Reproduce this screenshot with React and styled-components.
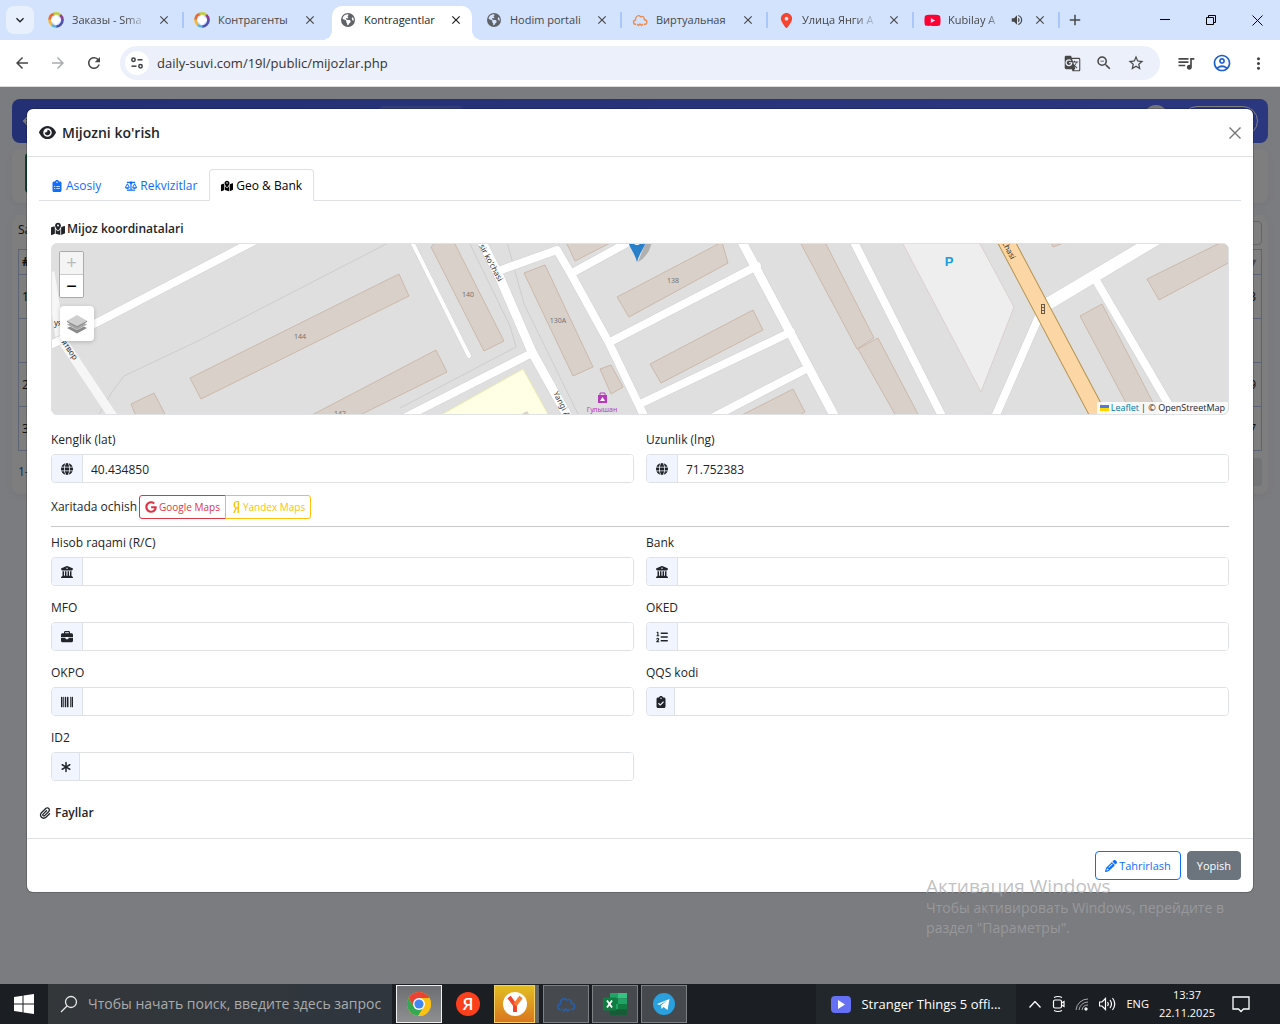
import React from 'react';
import styled, { createGlobalStyle, css } from 'styled-components';
import {
  FaEye, FaClipboardList, FaScaleBalanced, FaMapLocationDot, FaGlobe, FaBuildingColumns,
  FaBriefcase, FaListOl, FaBarcode, FaClipboardCheck, FaAsterisk, FaPaperclip, FaPencil,
  FaGoogle, FaYandex, FaEarthAmericas, FaLocationDot, FaYoutube,
} from 'react-icons/fa6';
import {
  MdArrowBack, MdArrowForward, MdRefresh, MdGTranslate, MdZoomOut, MdStarOutline, MdQueueMusic,
  MdOutlineAccountCircle, MdMoreVert, MdVolumeUp, MdClose, MdAdd, MdKeyboardArrowDown,
} from 'react-icons/md';

const tabs = [
  { title: 'Заказы - Sma', icon: 'ring', line: true, fade: true },
  { title: 'Контрагенты', icon: 'ring' },
  { title: 'Kontragentlar', icon: 'globe', active: true },
  { title: 'Hodim portali', icon: 'globe', line: true },
  { title: 'Виртуальная', icon: 'cloud', line: true },
  { title: 'Улица Янги А', icon: 'pin', line: true, fade: true },
  { title: 'Kubilay A', icon: 'youtube', line: true, sound: true, fade: true },
];

const geoFields = [
  { id: 'lat', label: 'Kenglik (lat)', icon: FaGlobe, value: '40.434850' },
  { id: 'lng', label: 'Uzunlik (lng)', icon: FaGlobe, value: '71.752383' },
];

const bankFields = [
  { id: 'rc', label: 'Hisob raqami (R/C)', icon: FaBuildingColumns },
  { id: 'bank', label: 'Bank', icon: FaBuildingColumns },
  { id: 'mfo', label: 'MFO', icon: FaBriefcase },
  { id: 'oked', label: 'OKED', icon: FaListOl },
  { id: 'okpo', label: 'OKPO', icon: FaBarcode },
  { id: 'qqs', label: 'QQS kodi', icon: FaClipboardCheck, slim: true },
  { id: 'id2', label: 'ID2', icon: FaAsterisk, slim: true },
];

const rows = [
  { no: '1', total: '3' },
  { no: '', total: '' },
  { no: '2', total: '9' },
  { no: '3', total: '7' },
];

const buildings = [
  '190,378 399,274 409,296 201,399',
  '131,404 154,393 166,416 136,416',
  '310,416 436,350 447,372 358,416',
  '431,247 436,242 454,242 504,341 484,351',
  '524,273 545,265 593,367 573,376',
  '600,369 611,365 623,387 611,394',
  '566,242 575,261 612,242',
  '617,297 722,242 728,263 629,317',
  '650,364 753,310 763,330 661,383',
  '740,416 793,389 805,412 798,416',
  '800,242 825,242 874,338 857,349',
  '858,349 878,338 919,416 896,416',
  '1147,279 1222,242 1232,238 1232,261 1159,300',
  '1080,316 1102,304 1160,416 1133,416',
  '1050,240 1053,247 1066,242',
];

const roads = [
  { d: 'M46 347L100 321L256 240', w: 8 },
  { d: 'M408 234L469 356', w: 4 },
  { d: 'M396 422L532 353', w: 8 },
  { d: 'M478 234L500 278L532 352L572 424', w: 9 },
  { d: 'M501 270L557 250L571 274L609 343L648 424', w: 8 },
  { d: 'M572 273L636 238', w: 8 },
  { d: 'M610 342L757 266', w: 8 },
  { d: 'M640 404L791 332', w: 8 },
  { d: 'M702 423L808 368', w: 8 },
  { d: 'M740 238L837 421', w: 9 },
  { d: 'M850 234L946 424', w: 8 },
  { d: 'M992 424L1040 314', w: 8 },
  { d: 'M1046 305L1160 237', w: 12 },
  { d: 'M1097 282L1180 424', w: 8 },
];

const numbers = [
  [300, 339, '144'], [340, 416, '142'], [468, 297, '140'], [558, 323, '130A'], [673, 283, '138'],
];

function MapPicture() {
  return (
    <MapSvg viewBox="52 244 1176 170" preserveAspectRatio="xMidYMid slice" role="img" aria-label="Mijoz koordinatalari">
      <rect x="0" y="200" width="1300" height="260" fill="#dfdfdf" />
      <g fill="none" stroke="#cdcdcd" strokeWidth="1">
        <path d="M98 416L112 392L124 376L200 340L390 242" />
        <path d="M469 242L510 326L516 347L400 408M507 242L524 304L580 418" />
      </g>
      <polygon points="902,242 979,242 1014,307 981,392" fill="#eeeeee" stroke="#dccfcf" />
      <polygon points="523,369 549,416 439,416" fill="#ffffe5" stroke="#ecebb0" />
      <polygon points="522,414 527,411 530,416" fill="#d9d0c9" />
      {buildings.map((points) => (
        <polygon key={points} points={points} fill="#d9d0c9" stroke="#cbb9ab" strokeWidth="1" />
      ))}
      <path d="M50 272L60 337L118 424" fill="none" stroke="#f6f6f6" strokeWidth="9" />
      {roads.map((road) => (
        <path key={road.d} d={road.d} fill="none" stroke="#d2d2d2" strokeWidth={road.w + 1} strokeLinecap="round" strokeLinejoin="round" />
      ))}
      {roads.map((road) => (
        <path key={road.d} d={road.d} fill="none" stroke="#fff" strokeWidth={road.w} strokeLinecap="round" strokeLinejoin="round" />
      ))}
      <path d="M1000 230L1103 424" stroke="#b5924f" strokeWidth="17" />
      <path d="M1000 230L1103 424" stroke="#fcd6a4" strokeWidth="15" />
      <g fontFamily="Noto Sans, sans-serif" fontSize="7" fill="#737373" textAnchor="middle">
        {numbers.map(([x, y, text]) => <text key={text} x={x} y={y}>{text}</text>)}
      </g>
      <g fontFamily="Noto Sans, sans-serif" fontSize="8" fill="#333">
        <text transform="translate(479 246) rotate(62)">sir ko'chasi</text>
        <text transform="translate(553 393) rotate(63)">Yangi A</text>
        <text transform="translate(1002 243) rotate(62)">chasi</text>
        <text transform="translate(61 342) rotate(55)">ятвор</text>
        <text transform="translate(54 326)">уя</text>
      </g>
      <text x="949" y="266" fontFamily="Liberation Sans, sans-serif" fontWeight="700" fontSize="13" fill="#1a9be0" textAnchor="middle">P</text>
      <path d="M598 395h9v8h-9z" fill="#b63ab8" />
      <path d="M600 395v-2h5v2" fill="none" stroke="#b63ab8" />
      <path d="M602.500 397l2.500 4h-5z" fill="#fff" />
      <text x="602" y="412" fontFamily="Noto Sans, sans-serif" fontSize="7" fill="#b63ab8" textAnchor="middle">Гулышан</text>
      <rect x="1041.500" y="304.500" width="3" height="9" fill="none" stroke="#665a48" />
      <path d="M1041 307.500h4M1041 310.500h4" stroke="#665a48" />
      <path d="M638 262L646 242h6q-3 14 -14 20z" fill="#444" opacity="0.3" />
      <path d="M628 242c2 6 7 12 9 20c2 -8 7 -14 9 -20z" fill="#2880ca" />
      <path d="M634 243a3 2 0 0 0 6 0z" fill="#fff" />
    </MapSvg>
  );
}

function Cloud({ color, size = 16 }) {
  return (
    <svg width={size} height={size} viewBox="0 0 16 16" fill="none" stroke={color} strokeWidth="1.3">
      <path d="M4 12.5C1 12.5 .6 8.500 3.500 8C3.300 4 7 2.500 8.500 4.800C11 3.500 12.800 5.500 12.200 7.500C16 8 15.500 12.500 12 12.500" />
      <path d="M5 12l1.500 1.500L8 12l1.500 1.500L11 12" />
    </svg>
  );
}

function Favicon({ kind }) {
  if (kind === 'ring') {
    return (
      <svg width="16" height="16" viewBox="0 0 16 16" fill="none" strokeWidth="2.6">
        <path d="M1.500 8A6.500 6.500 0 0 1 6.500 1.700" stroke="#ea6a2c" />
        <path d="M5.500 2A6.500 6.500 0 0 1 12.500 3.200" stroke="#c2cf45" />
        <path d="M12.200 3A6.500 6.500 0 0 1 14.500 8.500" stroke="#8c3f8f" />
        <path d="M14.500 8A6.500 6.500 0 0 1 8 14.500" stroke="#4f4fb8" />
        <path d="M8.500 14.500A6.500 6.500 0 0 1 3.500 12.600" stroke="#55b4e4" />
        <path d="M4 13A6.500 6.500 0 0 1 1.500 7.500" stroke="#f3b73c" />
        <path d="M8 2.800l5.200 5.200L8 13.200 2.800 8z" fill="#fff" />
      </svg>
    );
  }
  if (kind === 'cloud') return <Cloud color="#ee8a4c" />;
  if (kind === 'pin') return <FaLocationDot size={15} color="#f8432f" />;
  if (kind === 'youtube') return <FaYoutube size={17} color="#f03" />;
  return <FaEarthAmericas size={14} color="#5f6368" />;
}

function Field({ field }) {
  const Icon = field.icon;
  return (
    <FieldBox>
      <FieldLabel htmlFor={field.id}>{field.label}</FieldLabel>
      <InputGroup>
        <InputIcon $slim={field.slim}><Icon /></InputIcon>
        <Input id={field.id} type="text" defaultValue={field.value} />
      </InputGroup>
    </FieldBox>
  );
}

function BrowserBar() {
  return (
    <header>
      <TabStrip>
        <TabSearch aria-label="Search tabs"><MdKeyboardArrowDown size={16} /></TabSearch>
        {tabs.map((tab) => (
          <BrowserTab key={tab.title} $active={tab.active} $line={tab.line}>
            <FaviconBox><Favicon kind={tab.icon} /></FaviconBox>
            <TabTitle $fade={tab.fade}>{tab.title}</TabTitle>
            {tab.sound && <MdVolumeUp size={14} />}
            <TabClose aria-label="Close tab"><MdClose size={14} /></TabClose>
          </BrowserTab>
        ))}
        <NewTab aria-label="New tab"><MdAdd size={18} /></NewTab>
        <WindowButtons>
          <WindowButton aria-label="Minimize">
            <svg width="10" height="10" viewBox="0 0 10 10"><path d="M0 4.500h10" stroke="#000" /></svg>
          </WindowButton>
          <WindowButton aria-label="Restore">
            <svg width="10" height="10" viewBox="0 0 10 10" fill="none" stroke="#000"><path d="M.5 2.500h7v7h-7zM2.500 2.500v-2h7v7h-2" /></svg>
          </WindowButton>
          <WindowButton aria-label="Close">
            <svg width="11" height="11" viewBox="0 0 11 11"><path d="M.5 .5l10 10M10.500 .5l-10 10" stroke="#000" /></svg>
          </WindowButton>
        </WindowButtons>
      </TabStrip>
      <Toolbar>
        <ToolButton aria-label="Back"><MdArrowBack size={18} /></ToolButton>
        <ToolButton aria-label="Forward" $muted><MdArrowForward size={18} /></ToolButton>
        <ToolButton aria-label="Reload"><MdRefresh size={18} /></ToolButton>
        <AddressBar>
          <SiteInfo aria-label="Site information">
            <svg width="14" height="14" viewBox="0 0 14 14" fill="none" stroke="#3c4043" strokeWidth="1.500">
              <circle cx="3.500" cy="3.800" r="1.700" /><path d="M7.500 3.800h5" />
              <circle cx="10.500" cy="10.200" r="1.700" /><path d="M1.500 10.200h5" />
            </svg>
          </SiteInfo>
          <Address aria-label="Address" defaultValue="daily-suvi.com/19l/public/mijozlar.php" />
          <ToolButton aria-label="Translate"><MdGTranslate size={17} /></ToolButton>
          <ToolButton aria-label="Zoom"><MdZoomOut size={18} /></ToolButton>
          <ToolButton aria-label="Bookmark"><MdStarOutline size={18} /></ToolButton>
        </AddressBar>
        <ToolButton aria-label="Media"><MdQueueMusic size={20} /></ToolButton>
        <ToolButton aria-label="Profile" $blue><MdOutlineAccountCircle size={20} /></ToolButton>
        <ToolButton aria-label="Menu"><MdMoreVert size={19} /></ToolButton>
      </Toolbar>
    </header>
  );
}

function ClientsPage() {
  return (
    <PageContent>
      <Navbar>
        <MdArrowBack size={16} />
        <NavPill />
        <NavAvatar />
        <NavButton />
      </Navbar>
      <ActionCard><GreenButton aria-label="Excel" /></ActionCard>
      <TableCard>
        <TableTop><span>Saralash</span><SearchBox aria-label="Qidirish" /></TableTop>
        <DataTable>
          <thead><tr><th>#</th><th>▾</th></tr></thead>
          <tbody>
            {rows.map((row, i) => <tr key={i}><td>{row.no}</td><td>{row.total}</td></tr>)}
          </tbody>
        </DataTable>
        <TableBottom><a href="#list">1-3</a><PageButton aria-label="Keyingi" /></TableBottom>
      </TableCard>
    </PageContent>
  );
}

function ClientModal() {
  return (
    <Modal role="dialog" aria-labelledby="modal-title">
      <ModalHeader>
        <FaEye size={17} />
        <ModalTitle id="modal-title">Mijozni ko'rish</ModalTitle>
        <CloseButton aria-label="Close">
          <svg width="12" height="12" viewBox="0 0 12 12"><path d="M.5 .5l11 11M11.500 .5l-11 11" stroke="#777" strokeWidth="1.400" /></svg>
        </CloseButton>
      </ModalHeader>
      <ModalBody>
        <NavTabs role="tablist">
          <NavTab role="tab"><FaClipboardList />Asosiy</NavTab>
          <NavTab role="tab"><FaScaleBalanced />Rekvizitlar</NavTab>
          <NavTab role="tab" $active><FaMapLocationDot />Geo &amp; Bank</NavTab>
        </NavTabs>
        <TabPane>
          <SectionTitle><FaMapLocationDot size={14} />Mijoz koordinatalari</SectionTitle>
          <MapBox>
            <MapPicture />
            <ZoomControl>
              <ZoomButton disabled>+</ZoomButton>
              <ZoomButton>−</ZoomButton>
            </ZoomControl>
            <LayersButton aria-label="Layers">
              <svg width="22" height="22" viewBox="0 0 22 22">
                <path d="M1 15l10 5.500L21 15l-3-1.500L11 17l-7-3.500z" fill="#8a8a8a" />
                <path d="M1 11.500L11 17l10-5.500-3-1.500-7 3.500L4 10z" fill="#a8a8a8" />
                <path d="M11 2L1 7.700l10 5.300 10-5.300z" fill="#cfcfcf" />
                <path d="M1 7.700L11 13l10-5.300v1.300L11 14.500 1 9z" fill="#8f8f8f" />
              </svg>
            </LayersButton>
            <Attribution>
              <svg width="9" height="6" viewBox="0 0 9 6"><path d="M0 0h9v3H0z" fill="#4c7be1" /><path d="M0 3h9v3H0z" fill="#ffd500" /></svg>
              <a href="#leaflet">Leaflet</a><span>| © OpenStreetMap</span>
            </Attribution>
          </MapBox>
          <FieldGrid>
            {geoFields.map((field) => <Field key={field.id} field={field} />)}
          </FieldGrid>
          <OpenRow>
            <span>Xaritada ochish</span>
            <MapLinks>
              <MapLink href="#google" $color="#dc3545"><FaGoogle />Google Maps</MapLink>
              <MapLink href="#yandex" $color="#ffc107"><YandexIcon />Yandex Maps</MapLink>
            </MapLinks>
          </OpenRow>
          <Divider />
          <FieldGrid>
            {bankFields.map((field) => <Field key={field.id} field={field} />)}
          </FieldGrid>
        </TabPane>
        <FilesTitle><FaPaperclip />Fayllar</FilesTitle>
      </ModalBody>
      <ModalFooter>
        <Button><FaPencil size={12} />Tahrirlash</Button>
        <Button $solid>Yopish</Button>
      </ModalFooter>
    </Modal>
  );
}

function Taskbar() {
  return (
    <Bar>
      <StartButton aria-label="Start">
        <svg width="20" height="20" viewBox="0 0 20 20" fill="#fff"><path d="M0 3l8.500-1.200v7.700H0zM9.500 1.600L20 0v9.500H9.500zM0 10.500h8.500v7.700L0 17zM9.500 10.500H20V20L9.500 18.400z" /></svg>
      </StartButton>
      <SearchLabel>
        <svg width="18" height="18" viewBox="0 0 18 18" fill="none" stroke="#e8e8e8" strokeWidth="1.300"><circle cx="11" cy="7" r="5.500" /><path d="M7 11l-6 6" /></svg>
        <TaskSearch placeholder="Чтобы начать поиск, введите здесь запрос" aria-label="Поиск" />
      </SearchLabel>
      <Apps>
        <AppButton aria-label="Chrome" $state="current">
          <svg width="24" height="24" viewBox="0 0 24 24">
            <circle cx="12" cy="12" r="12" fill="#fbc116" />
            <path d="M1.600 6A12 12 0 0 1 22.400 6H12L7 15z" fill="#ea4335" />
            <path d="M1.600 6A12 12 0 0 0 11 24l6-9H7z" fill="#34a853" />
            <path d="M22.400 6A12 12 0 0 1 11 24l6-9V6z" fill="#fbc116" />
            <circle cx="12" cy="12" r="6" fill="#fff" /><circle cx="12" cy="12" r="4.600" fill="#4285f4" />
          </svg>
        </AppButton>
        <AppButton aria-label="Yandex" $state="plain"><RedDot>Я</RedDot></AppButton>
        <AppButton aria-label="Yandex Browser" $state="orange">
          <svg width="24" height="24" viewBox="0 0 24 24"><circle cx="12" cy="12" r="12" fill="#fff" /><path d="M6 5l6 8v7" fill="none" stroke="#f4452c" strokeWidth="4" /><path d="M18 5l-6 8" stroke="#f77b32" strokeWidth="4" /></svg>
        </AppButton>
        <AppButton aria-label="ATC"><Cloud color="#285fa9" size={20} /></AppButton>
        <AppButton aria-label="Excel">
          <svg width="24" height="22" viewBox="0 0 24 22">
            <path d="M7 0h8v5.500H7zM7 11h8v5.500H7z" fill="#21a366" /><path d="M15 0h9v5.500h-9z" fill="#33c481" />
            <path d="M7 5.500h8V11H7z" fill="#107c41" /><path d="M15 5.500h9V11h-9z" fill="#21a366" /><path d="M15 11h9v5.500h-9z" fill="#107c41" /><path d="M7 16.500h17V22H7z" fill="#185c37" />
            <path d="M0 4.500h13v13H0z" fill="#107c41" /><path d="M4 7.500l5 7M9 7.500l-5 7" stroke="#fff" strokeWidth="1.800" />
          </svg>
        </AppButton>
        <AppButton aria-label="Telegram">
          <svg width="22" height="22" viewBox="0 0 22 22"><circle cx="11" cy="11" r="11" fill="#2aa1de" /><path d="M4 11l12.500-5-2 11-4-3-2 2-.5-3.500 6-5-7.500 4.500z" fill="#fff" /></svg>
        </AppButton>
      </Apps>
      <MediaBox>
        <svg width="20" height="17" viewBox="0 0 20 17"><rect width="20" height="17" rx="4" fill="#6570f4" /><path d="M7 4l7 4.500L7 13z" fill="#fff" /></svg>
        <span>Stranger Things 5 offi...</span>
      </MediaBox>
      <Tray>
        <svg width="12" height="7" viewBox="0 0 12 7" fill="none" stroke="#fff" strokeWidth="1.300"><path d="M.5 6.500l5.500-6 5.500 6" /></svg>
        <svg width="14" height="18" viewBox="0 0 14 18" fill="none" stroke="#fff" strokeWidth="1.200"><rect x="2.500" y="5" width="8" height="8" rx="1.500" /><path d="M10.500 8l2.500-1.500v5l-2.500-1.500M3 2.500Q7 .5 11 2.500M3 15.500Q7 17.500 11 15.500" /></svg>
        <svg width="14" height="14" viewBox="0 0 14 14" fill="none" stroke="#aaa"><path d="M1 13A12 12 0 0 1 13 2M4 13A9 9 0 0 1 13 5M7 13A6 6 0 0 1 13 8" /><circle cx="11" cy="12" r="1.200" fill="#fff" stroke="#fff" /></svg>
        <svg width="17" height="14" viewBox="0 0 17 14" fill="none" stroke="#fff" strokeWidth="1.200"><path d="M.5 5h2.500l3.500-3.500v11L3 9H.5zM8.500 5q1.500 2 0 4M11 3q3 4 0 8M13.500 1q4.500 6 0 12" /></svg>
        <span>ENG</span>
        <Clock><time>13:37</time><span>22.11.2025</span></Clock>
        <svg width="18" height="18" viewBox="0 0 18 18" fill="none" stroke="#fff" strokeWidth="1.300"><path d="M1 2h16v12h-5.500L9 16.500 6.500 14H1z" /></svg>
      </Tray>
    </Bar>
  );
}

export default function App() {
  return (
    <Desktop>
      <GlobalStyle />
      <BrowserBar />
      <Page>
        <ClientsPage />
        <Backdrop />
        <ClientModal />
        <Watermark>
          <h2>Активация Windows</h2>
          <p>Чтобы активировать Windows, перейдите в<br />раздел "Параметры".</p>
        </Watermark>
      </Page>
      <Taskbar />
    </Desktop>
  );
}

const GlobalStyle = createGlobalStyle`
  * {
    box-sizing: border-box;
  }

  body {
    margin: 0;
    font-family: "Open Sans", "Noto Sans", sans-serif;
    font-size: 12px;
    line-height: 18px;
    color: #212529;
  }

  button, input {
    font: inherit;
    color: inherit;
  }

  button {
    padding: 0;
    border: none;
    background: none;
    cursor: pointer;
  }

  svg {
    flex: none;
  }
`;

const Desktop = styled.div`
  min-height: 100vh;
  display: flex;
  flex-direction: column;
`;

const TabStrip = styled.div`
  display: flex;
  align-items: flex-end;
  height: 40px;
  padding-left: 6px;
  background: #d3e3fd;
`;

const TabSearch = styled.button`
  width: 28px;
  height: 28px;
  margin: 0 4px 6px 0;
  display: flex;
  align-items: center;
  justify-content: center;
  border-radius: 8px;
  background: #e9f0fd;
`;

const BrowserTab = styled.div`
  position: relative;
  flex: 0 1 146px;
  min-width: 0;
  height: 34px;
  padding: 0 12px 6px 10px;
  display: flex;
  align-items: center;
  gap: 8px;
  color: #474747;

  ${(p) => p.$line && css`
    &::after {
      content: "";
      position: absolute;
      right: 0;
      top: 6px;
      width: 2px;
      height: 16px;
      background: #a8c7fa;
    }
  `}

  ${(p) => p.$active && css`
    flex-basis: 140px;
    margin: 0 4px 0 2px;
    padding: 0 8px 6px 8px;
    background: #fff;
    color: #1f1f1f;
    border-radius: 10px 10px 0 0;

    &::before, &::after {
      content: "";
      position: absolute;
      bottom: 0;
      width: 10px;
      height: 10px;
    }

    &::before {
      left: -10px;
      background: radial-gradient(circle at 0 0, transparent 10px, #fff 10px);
    }

    &::after {
      right: -10px;
      background: radial-gradient(circle at 100% 0, transparent 10px, #fff 10px);
    }
  `}
`;

const FaviconBox = styled.span`
  flex: none;
  width: 16px;
  display: flex;
  justify-content: center;
`;

const TabTitle = styled.span`
  flex: 1;
  min-width: 0;
  font-size: 11px;
  white-space: nowrap;
  mask-image: ${(p) => (p.$fade ? 'linear-gradient(to right, #000 70%, transparent)' : 'none')};
`;

const TabClose = styled.button`
  flex: none;
  width: 16px;
  height: 16px;
  display: flex;
  align-items: center;
  justify-content: center;
`;

const NewTab = styled.button`
  width: 28px;
  height: 28px;
  margin: 0 0 6px 1px;
  display: flex;
  align-items: center;
  justify-content: center;
  color: #474747;
`;

const WindowButtons = styled.div`
  display: flex;
  margin-left: auto;
  align-self: stretch;
`;

const WindowButton = styled.button`
  width: 46px;
  display: flex;
  align-items: center;
  justify-content: center;
`;

const Toolbar = styled.div`
  display: flex;
  align-items: center;
  gap: 8px;
  height: 47px;
  padding: 0 8px;
  background: #fff;
  border-bottom: 1px solid #dcdcdc;
`;

const ToolButton = styled.button`
  width: 28px;
  height: 28px;
  display: flex;
  align-items: center;
  justify-content: center;
  color: ${(p) => (p.$blue ? '#1b5fd0' : p.$muted ? '#a9acb0' : '#474747')};
`;

const AddressBar = styled.div`
  flex: 1;
  display: flex;
  align-items: center;
  gap: 4px;
  height: 34px;
  margin: 0 4px;
  padding: 0 10px 0 5px;
  border-radius: 17px;
  background: #ecf0fa;
`;

const SiteInfo = styled.button`
  width: 24px;
  height: 24px;
  display: flex;
  align-items: center;
  justify-content: center;
  border-radius: 50%;
  background: #fff;
`;

const Address = styled.input`
  flex: 1;
  min-width: 0;
  padding: 0 4px;
  border: none;
  outline: none;
  background: none;
  font-size: 13px;
  color: #333;
`;

const Page = styled.main`
  position: relative;
  flex: 1;
  padding: 22px 27px 92px;
  background: #f7f8ff;
`;

/* dimmed list page that stays behind the dialog */
const PageContent = styled.div`
  position: absolute;
  inset: 0;
  padding: 12px;
`;

const Backdrop = styled.div`
  position: absolute;
  inset: 0;
  background: rgba(0, 0, 0, 0.5);
`;

const Navbar = styled.div`
  display: flex;
  align-items: center;
  height: 44px;
  padding: 0 10px 0 8px;
  border-radius: 8px;
  color: #fff;
  background: linear-gradient(to right, #4660e8, #566fff);
`;

const NavPill = styled.span`
  width: 86px;
  height: 30px;
  margin-left: 342px;
  border-radius: 6px;
  background: rgba(255, 255, 255, 0.15);
`;

const NavAvatar = styled.span`
  width: 28px;
  height: 32px;
  margin: 0 12px 0 auto;
  border-radius: 50%;
  background: #eee;
`;

const NavButton = styled.span`
  width: 76px;
  height: 30px;
  border: 1px solid #fff;
  border-radius: 15px;
`;

const ActionCard = styled.div`
  height: 54px;
  margin: 6px 0 12px;
  padding: 4px 13px;
  border-radius: 8px;
  background: #fcfcfc;
  box-shadow: 0 2px 8px rgba(0, 0, 0, 0.05);
`;

const GreenButton = styled.button`
  width: 60px;
  height: 40px;
  border-radius: 4px;
  background: #198754;
`;

const TableCard = styled.div`
  padding: 6px 6px 8px;
  border-radius: 8px;
  background: #fcfcfc;
  box-shadow: 0 2px 8px rgba(0, 0, 0, 0.05);
`;

const TableTop = styled.div`
  display: flex;
  justify-content: space-between;
  height: 28px;
`;

const SearchBox = styled.input`
  width: 180px;
  height: 24px;
  border: 1px solid #ccc;
  border-radius: 4px;
  background: none;
`;

const DataTable = styled.table`
  width: 100%;
  border-collapse: collapse;

  th, td {
    height: 44px;
    padding: 0 3px;
    border: 1px solid #b7c7ea;
    text-align: left;
  }

  th {
    height: 25px;
  }

  th:last-child, td:last-child {
    padding-right: 5px;
    text-align: right;
  }

  th:last-child {
    color: #999;
  }
`;

const TableBottom = styled.div`
  display: flex;
  align-items: center;
  justify-content: space-between;
  padding-top: 7px;

  a {
    color: #2456b8;
    text-decoration: none;
  }
`;

const PageButton = styled.button`
  width: 60px;
  height: 28px;
  border-radius: 4px;
  background: #e6e8ec;
`;

const Modal = styled.section`
  position: relative;
  border-radius: 6px;
  background: #fff;
  box-shadow: 0 0 0 1px rgba(0, 0, 0, 0.18);
`;

const ModalHeader = styled.div`
  display: flex;
  align-items: center;
  gap: 6px;
  height: 48px;
  padding: 0 12px;
  border-bottom: 1px solid #dee2e6;
`;

const ModalTitle = styled.h1`
  margin: 0;
  font-size: 14px;
  font-weight: 600;
`;

const CloseButton = styled.button`
  width: 12px;
  height: 12px;
  margin-left: auto;
  display: flex;
`;

const ModalBody = styled.div`
  padding: 12px 12px 16px;
`;

const NavTabs = styled.div`
  display: flex;
  border-bottom: 1px solid #dee2e6;
`;

const NavTab = styled.button`
  display: flex;
  align-items: center;
  gap: 3px;
  height: 32px;
  margin-bottom: -1px;
  padding: 1px 11px 0;
  border: 1px solid transparent;
  border-radius: 4px 4px 0 0;
  color: #0d6efd;

  svg {
    width: auto;
    height: 12px;
  }

  ${(p) => p.$active && css`
    color: #000;
    background: #fff;
    border-color: #dee2e6 #dee2e6 #fff;
  `}
`;

const TabPane = styled.div`
  padding: 19px 12px 0;
`;

const SectionTitle = styled.h2`
  display: flex;
  align-items: center;
  gap: 2px;
  margin: 0 0 5px;
  font-size: 12px;
  font-weight: 600;
`;

const MapBox = styled.div`
  position: relative;
  height: 172px;
  margin-bottom: 15px;
  overflow: hidden;
  border: 1px solid #dee2e6;
  border-radius: 6px;
  background: #dfdfdf;
`;

const MapSvg = styled.svg`
  display: block;
  width: 100%;
  height: 100%;
`;

const ZoomControl = styled.div`
  position: absolute;
  left: 7px;
  top: 7px;
  width: 25px;
  border: 1px solid #aaa;
  border-radius: 2px;
  overflow: hidden;
`;

const ZoomButton = styled.button`
  display: block;
  width: 100%;
  height: 22px;
  background: #fff;
  font-family: "Liberation Sans", sans-serif;
  font-size: 18px;
  line-height: 22px;
  color: #000;

  & + & {
    border-top: 1px solid #ccc;
    height: 23px;
  }

  &:disabled {
    background: #f4f4f4;
    color: #bbb;
  }
`;

const LayersButton = styled.button`
  position: absolute;
  left: 8px;
  top: 62px;
  width: 34px;
  height: 35px;
  display: flex;
  align-items: center;
  justify-content: center;
  border-radius: 4px;
  background: #fff;
  box-shadow: 0 1px 4px rgba(0, 0, 0, 0.2);
`;

const Attribution = styled.div`
  position: absolute;
  right: 0;
  bottom: 0;
  display: flex;
  align-items: center;
  gap: 2px;
  height: 12px;
  padding: 0 3px;
  background: rgba(255, 255, 255, 0.8);
  font-size: 9px;
  line-height: 12px;

  a {
    color: #0078a8;
    text-decoration: none;
  }
`;

const FieldGrid = styled.div`
  display: grid;
  grid-template-columns: 1fr 1fr;
  gap: 12px;
`;

const FieldBox = styled.div`
  min-width: 0;
`;

const FieldLabel = styled.label`
  display: block;
  margin-bottom: 4px;
  line-height: 20px;
`;

const InputGroup = styled.div`
  display: flex;
  height: 29px;
  border: 1px solid #dee2e6;
  border-radius: 4px;
  overflow: hidden;
`;

const InputIcon = styled.span`
  flex: none;
  width: ${(p) => (p.$slim ? 28 : 31)}px;
  display: flex;
  align-items: center;
  justify-content: center;
  border-right: 1px solid #dee2e6;
  background: #f1f5ff;
`;

const Input = styled.input`
  flex: 1;
  min-width: 0;
  padding: 2px 8px 0;
  border: none;
  outline: none;
`;

const OpenRow = styled.div`
  display: flex;
  align-items: center;
  gap: 2px;
  margin: 12px 0 7px;
`;

const MapLinks = styled.div`
  display: flex;
`;

const MapLink = styled.a`
  display: flex;
  align-items: center;
  gap: 2px;
  height: 24px;
  padding: 0 5px;
  border: 1px solid ${(p) => p.$color};
  border-radius: 3px 0 0 3px;
  color: ${(p) => p.$color};
  font-size: 10px;
  text-decoration: none;

  svg {
    width: auto;
    height: 12px;
  }

  & + & {
    margin-left: -1px;
    border-radius: 0 3px 3px 0;
  }
`;

/* the glyph sits in a wide box, so pull the sides in */
const YandexIcon = styled(FaYandex)`
  margin: 0 -1px;
`;

const Divider = styled.hr`
  margin: 0 0 6px;
  border: none;
  border-top: 1px solid #c8c9ca;
`;

const FilesTitle = styled.h2`
  display: flex;
  align-items: center;
  gap: 4px;
  margin: 23px 0 0;
  font-size: 12px;
  font-weight: 600;
`;

const ModalFooter = styled.div`
  display: flex;
  justify-content: flex-end;
  gap: 6px;
  padding: 12px;
  border-top: 1px solid #dee2e6;
`;

const Button = styled.button`
  display: flex;
  align-items: center;
  gap: 2px;
  height: 29px;
  padding: 0 9px;
  border: 1px solid ${(p) => (p.$solid ? '#6c757d' : '#0d6efd')};
  border-radius: 4px;
  background: ${(p) => (p.$solid ? '#6c757d' : '#fff')};
  color: ${(p) => (p.$solid ? '#fff' : '#0d6efd')};
  font-size: 11px;
`;

/* system notice, drawn over every window */
const Watermark = styled.div`
  position: absolute;
  right: 56px;
  bottom: 46px;
  color: rgba(165, 165, 168, 0.7);
  pointer-events: none;

  h2 {
    margin: 0;
    font-size: 19px;
    font-weight: 400;
    line-height: 24px;
  }

  p {
    margin: 0;
    font-size: 14px;
    line-height: 20px;
  }
`;

const Bar = styled.footer`
  display: flex;
  align-items: stretch;
  height: 40px;
  background: #1b1e22;
  color: #fff;
`;

const StartButton = styled.button`
  width: 48px;
  display: flex;
  align-items: center;
  justify-content: center;
`;

const SearchLabel = styled.label`
  flex: none;
  display: flex;
  align-items: center;
  gap: 10px;
  width: 344px;
  padding-left: 12px;
  background: linear-gradient(to right, #33373a, #2f363e);
`;

const TaskSearch = styled.input`
  flex: 1;
  min-width: 0;
  padding: 0;
  border: none;
  outline: none;
  background: none;
  font-size: 14px;

  &::placeholder {
    color: #a9abad;
    opacity: 1;
  }
`;

const Apps = styled.div`
  display: flex;
  align-items: center;
  gap: 3px;
  padding-left: 4px;
`;

const AppButton = styled.button`
  width: 46px;
  height: 38px;
  display: flex;
  align-items: center;
  justify-content: center;
  border: 1px solid #7d8083;
  background: #46494d;

  ${(p) => p.$state === 'current' && css`
    border-color: #f0f0f0;
    background: linear-gradient(#6c6e71, #8d8f91);
  `}

  ${(p) => p.$state === 'plain' && css`
    border-color: transparent;
    background: none;
  `}

  ${(p) => p.$state === 'orange' && css`
    width: 41px;
    margin-right: 5px;
    border-color: #f3cf6a;
    background: linear-gradient(#e3bd22, #d9761f);
    box-shadow: 4px 0 0 #64676a;
  `}
`;

const RedDot = styled.span`
  width: 24px;
  height: 24px;
  border-radius: 50%;
  background: #fc3f1d;
  font-size: 17px;
  font-weight: 600;
  line-height: 24px;
`;

const MediaBox = styled.div`
  display: flex;
  align-items: center;
  gap: 10px;
  width: 200px;
  margin-left: auto;
  padding-left: 15px;
  background: #22272c;
  font-size: 13px;
  white-space: nowrap;
`;

const Tray = styled.div`
  display: flex;
  align-items: center;
  gap: 10px;
  padding: 0 30px 0 13px;
  font-size: 11px;
`;

const Clock = styled.div`
  display: flex;
  flex-direction: column;
  align-items: center;
  margin-right: 7px;
`;
